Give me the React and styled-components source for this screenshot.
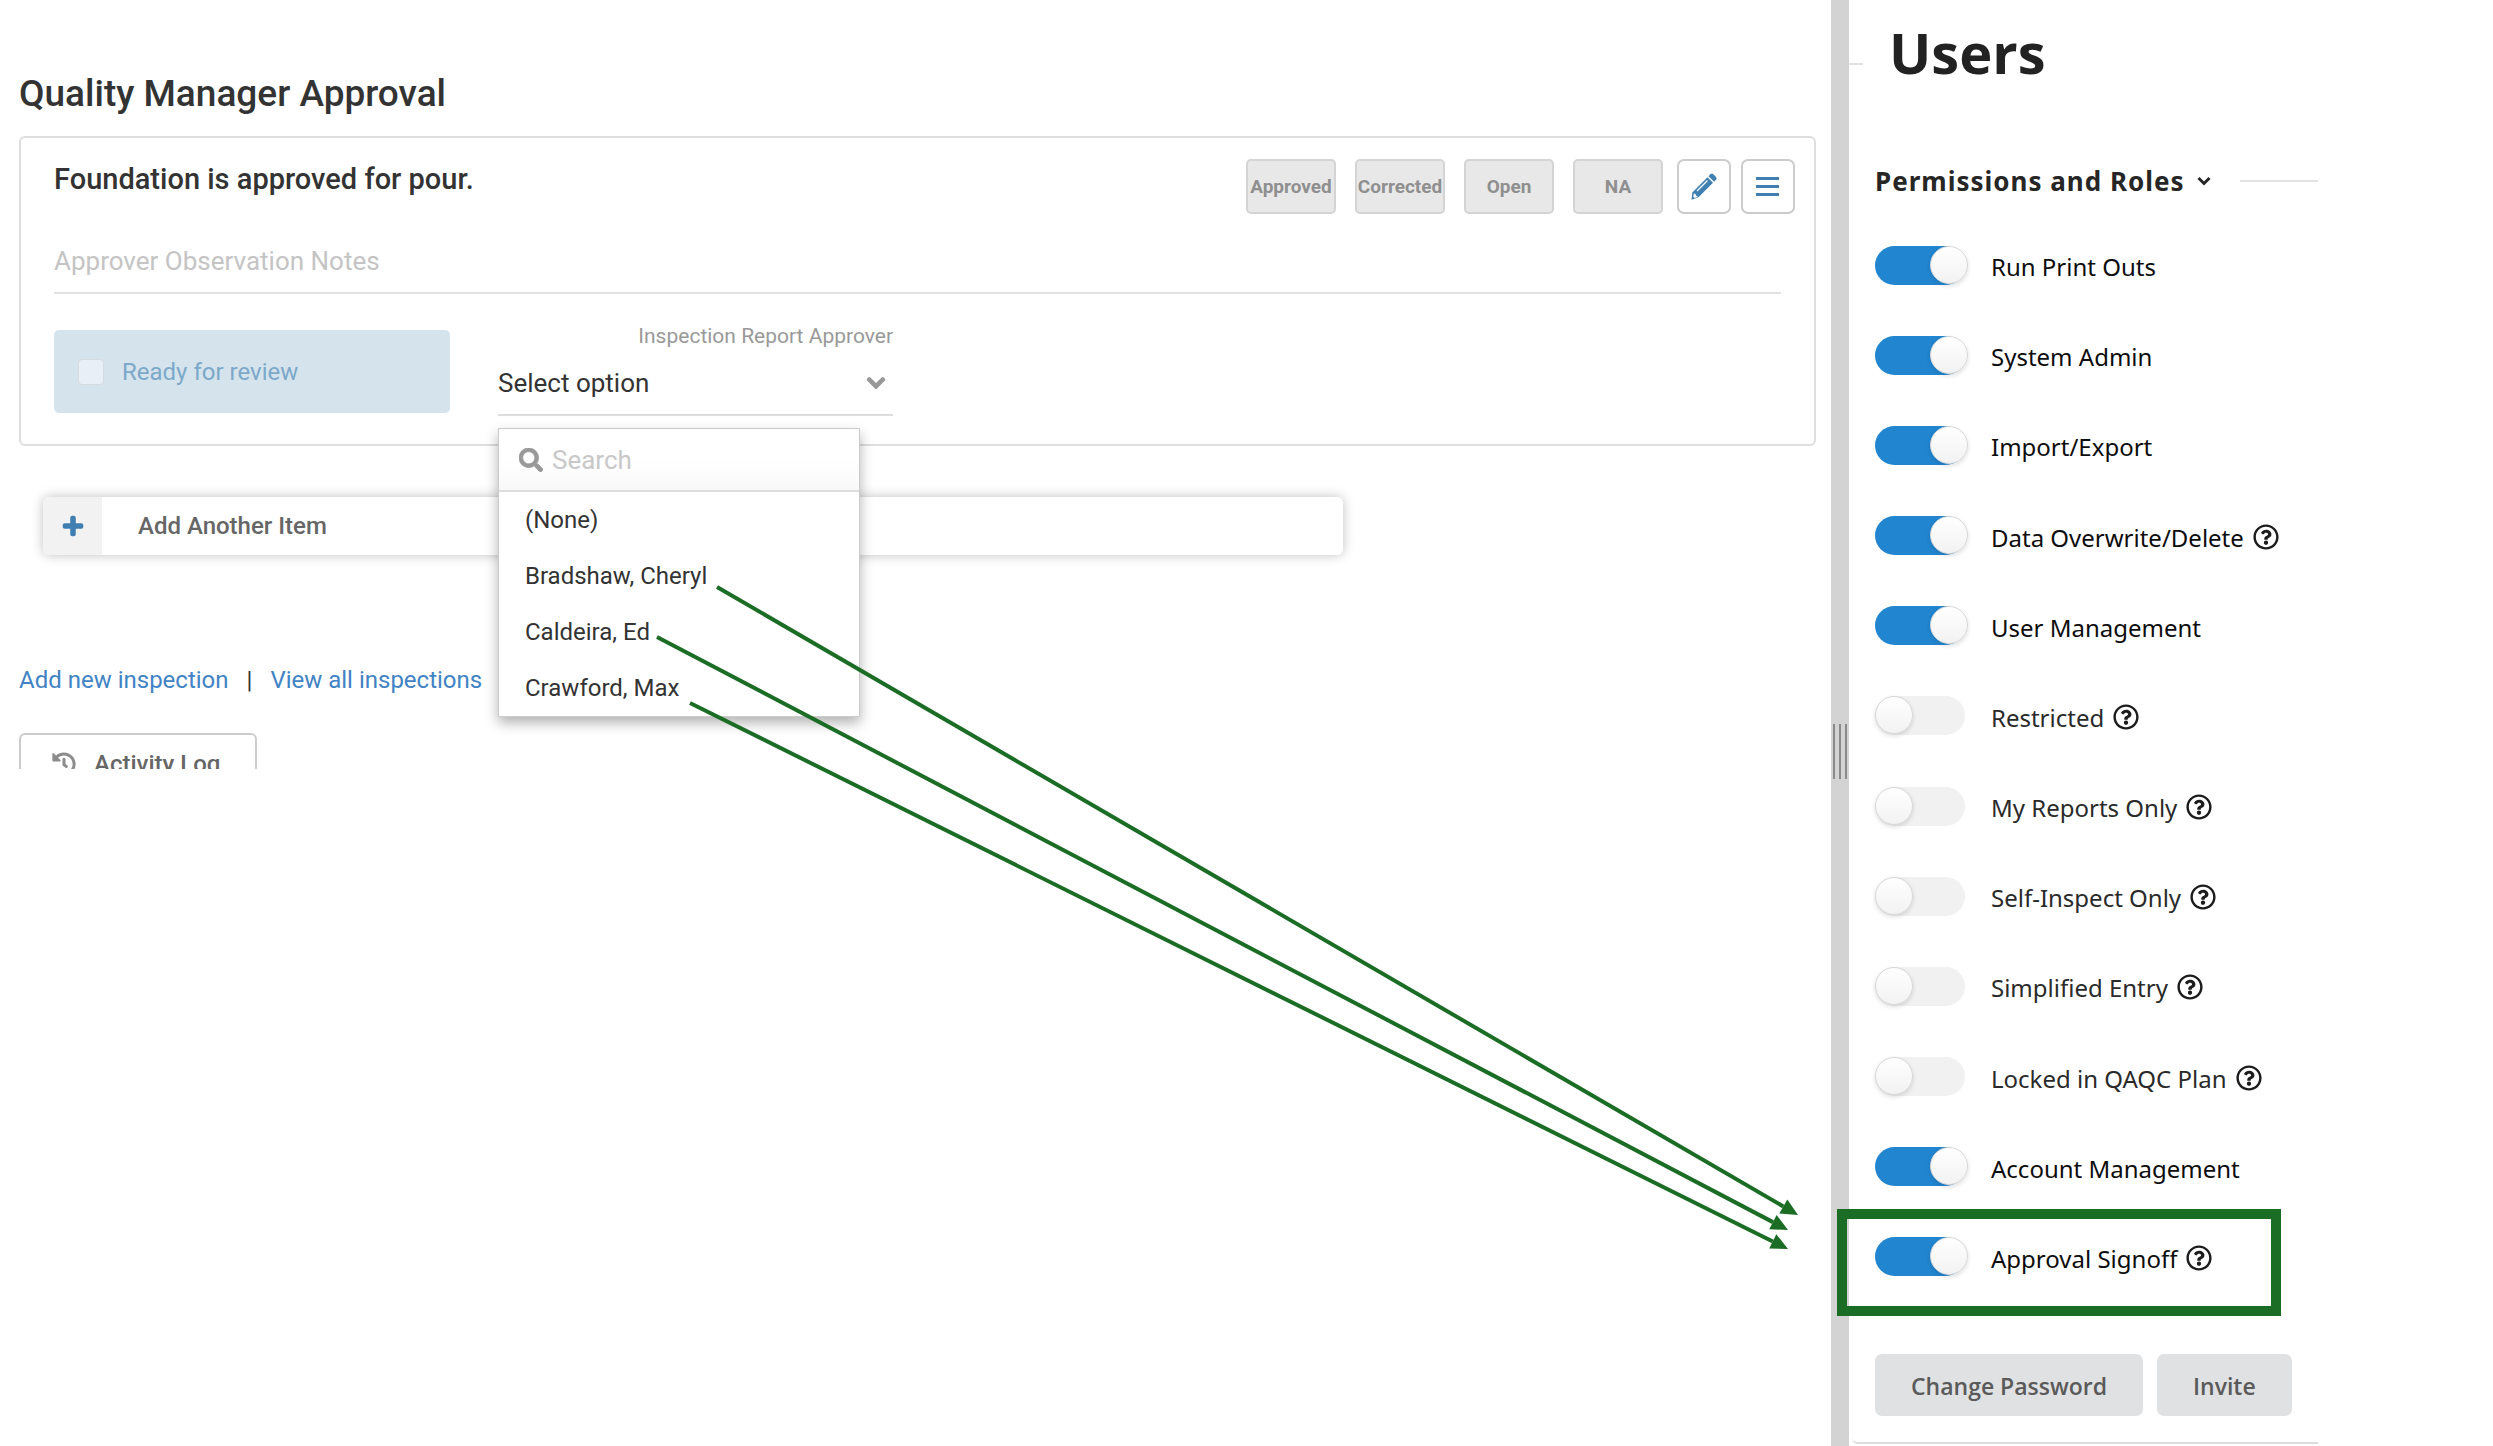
import React from "react";
import styled, { createGlobalStyle } from "styled-components";
import {
  FaChevronDown,
  FaHistory,
  FaPlus,
  FaRegQuestionCircle,
  FaSearch,
} from "react-icons/fa";

const GREEN = "#1b6c24";
const BLUE = "#3f7fb1";

const GlobalStyle = createGlobalStyle`
  *, *::before, *::after { box-sizing: border-box; }
  body { margin: 0; background: #fff; color: #333; font-family: Roboto, "Liberation Sans", sans-serif; }
  button, input, select { font-family: inherit; margin: 0; }
  h1, h2, h3, ul { margin: 0; padding: 0; }
  ul { list-style: none; }
`;

const Page = styled.div`
  position: relative;
  display: flex;
  min-height: 100vh;
  overflow: hidden;
`;

const Inspection = styled.main`
  flex: 1;
  min-width: 0;
  padding: 72px 15px 0 19px;
`;

const Heading = styled.h1`
  font-size: 37px;
  line-height: 44px;
  font-weight: 500;
`;

const Card = styled.section`
  margin-top: 20px;
  padding: 21px 33px 28px 33px;
  border: 2px solid #dedede;
  border-radius: 6px;
`;

const CardHeader = styled.div`
  display: flex;
  justify-content: space-between;
  align-items: flex-start;
  margin-right: -14px;
`;

const ItemTitle = styled.h2`
  padding-top: 2px;
  font-size: 29px;
  line-height: 36px;
  font-weight: 500;
`;

const Actions = styled.div`
  display: flex;
  gap: 10px;
`;

const Statuses = styled.div`
  display: flex;
  gap: 19px;
  margin-right: 4px;
`;

const StatusButton = styled.button`
  width: 90px;
  height: 55px;
  padding: 0;
  border: 2px solid #d4d4d4;
  border-radius: 5px;
  background: #e8e8e8;
  color: #8f8f8f;
  font-size: 19px;
  font-weight: 700;
`;

const IconButton = styled.button`
  display: flex;
  align-items: center;
  justify-content: center;
  width: 54px;
  height: 55px;
  padding: 0;
  border: 2px solid #ccc;
  border-radius: 7px;
  background: #fff;
  color: ${BLUE};
`;

const NotesInput = styled.input`
  display: block;
  width: 100%;
  height: 64px;
  margin-top: 16px;
  padding: 0;
  border: 0;
  border-bottom: 2px solid #e0e0e0;
  background: transparent;
  font-size: 26px;
  &::placeholder { color: #c4c4c4; }
`;

const Fields = styled.div`
  display: flex;
  align-items: flex-end;
  gap: 48px;
  margin-top: 30px;
`;

const ReadyBox = styled.label`
  display: flex;
  align-items: center;
  gap: 18px;
  width: 396px;
  height: 83px;
  margin-bottom: 3px;
  padding-left: 24px;
  border-radius: 5px;
  background: #d5e3ec;
  color: #7ca8c9;
  font-size: 24px;
`;

const ReadyCheck = styled.input`
  appearance: none;
  width: 26px;
  height: 26px;
  border: 1px solid #d6dbe0;
  border-radius: 4px;
  background: #e8eff6;
`;

const Approver = styled.div`
  position: relative;
  width: 395px;
`;

const ApproverLabel = styled.label`
  display: block;
  margin-bottom: 4px;
  color: #999;
  font-size: 21px;
  line-height: 24px;
  text-align: right;
`;

const SelectWrap = styled.div`
  display: flex;
  align-items: center;
  height: 64px;
  border-bottom: 2px solid #ddd;
  color: #999;
`;

const Select = styled.select`
  appearance: none;
  flex: 1;
  height: 62px;
  margin-right: -28px;
  padding: 0;
  border: 0;
  background: transparent;
  color: #333;
  font-size: 26px;
`;

const SelectArrow = styled(FaChevronDown)`
  margin-right: 7px;
  font-size: 20px;
  pointer-events: none;
  stroke-width: 36px;
`;

const Dropdown = styled.div`
  position: absolute;
  z-index: 2;
  top: 104px;
  left: 0;
  width: 362px;
  border: 1px solid #ccc;
  background: #fff;
  box-shadow: 0 6px 12px rgba(0, 0, 0, 0.3);
`;

const SearchRow = styled.label`
  display: flex;
  align-items: center;
  gap: 9px;
  height: 63px;
  padding-left: 20px;
  border-bottom: 2px solid #ddd;
  background: linear-gradient(#fff 50%, #f9f9f9);
  color: #999;
  font-size: 24px;
  svg { stroke-width: 16px; }
`;

const SearchInput = styled.input`
  flex: 1;
  min-width: 0;
  padding: 0;
  border: 0;
  background: transparent;
  font-size: 26px;
  &::placeholder { color: #c8c8c8; }
`;

const Option = styled.button`
  display: block;
  width: 100%;
  height: 56px;
  padding: 0 26px;
  border: 0;
  background: transparent;
  color: #333;
  font-size: 24px;
  text-align: left;
`;

const AddItem = styled.button`
  display: flex;
  align-items: center;
  width: 1300px;
  max-width: 100%;
  height: 58px;
  margin: 51px 0 0 24px;
  padding: 0;
  overflow: visible;
  border: 0;
  border-radius: 6px;
  background: #fff;
  box-shadow: 0 0 12px rgba(0, 0, 0, 0.25);
  color: #666;
  font-size: 24px;
  font-weight: 500;
`;

const AddIcon = styled.span`
  display: flex;
  align-items: center;
  justify-content: center;
  width: 59px;
  height: 100%;
  margin-right: 36px;
  border-radius: 6px 0 0 6px;
  background: #f2f2f2;
  color: ${BLUE};
  font-size: 22px;
  svg { stroke-width: 32px; }
`;

const Links = styled.nav`
  display: flex;
  gap: 18px;
  margin-top: 111px;
  font-size: 24px;
  line-height: 28px;
`;

const Link = styled.a`
  color: #4183c4;
  text-decoration: none;
`;

const ActivityClip = styled.div`
  height: 36px;
  margin-top: 39px;
  overflow: hidden;
`;

const ActivityButton = styled.button`
  display: flex;
  align-items: center;
  gap: 18px;
  width: 238px;
  height: 62px;
  padding: 0 31px;
  border: 2px solid #ccc;
  border-radius: 6px;
  background: #fff;
  color: #666;
  font-size: 24px;
  font-weight: 500;
  white-space: nowrap;
  svg { color: #8c8c8c; flex: none; }
`;

const Splitter = styled.div`
  display: flex;
  justify-content: center;
  gap: 4px;
  width: 18px;
  padding-top: calc(50vh + 1px);
  background: #d3d3d3;
`;

const GripLine = styled.span`
  width: 2px;
  height: 55px;
  background: #8a8a8a;
`;

const Users = styled.aside`
  display: flex;
  flex-direction: column;
  width: 644px;
  padding: 14px 175px 2px 26px;
  color: #1c1c1c;
  font-family: "Noto Sans", "Open Sans", sans-serif;
`;

const UsersHeader = styled.header`
  display: flex;
  align-items: flex-end;
  gap: 26px;
  margin-left: -26px;
`;

const UsersTitle = styled.h1`
  color: #222;
  font-family: "Open Sans", "Noto Sans", sans-serif;
  font-size: 56px;
  line-height: 76px;
  font-weight: 700;
`;

const HeaderRule = styled.span`
  width: 14px;
  height: 2px;
  margin-bottom: 25px;
  background: #e2e2e2;
`;

const SectionHeader = styled.div`
  display: flex;
  align-items: center;
  gap: 29px;
  margin-top: 73px;
`;

const SectionToggle = styled.button`
  display: flex;
  align-items: center;
  gap: 12px;
  padding: 0;
  border: 0;
  background: transparent;
  color: #262626;
  font-size: 26px;
  line-height: 36px;
  font-weight: 700;
  letter-spacing: 1px;
  white-space: nowrap;
`;

const SectionRule = styled.span`
  flex: 1;
  height: 2px;
  background: #e2e2e2;
`;

const Permissions = styled.ul`
  display: grid;
  grid-auto-rows: 1fr;
  flex: 1;
  margin-top: 21px;
`;

const Permission = styled.li`
  position: relative;
  display: flex;
  align-items: center;
  min-height: 60px;
`;

const Highlight = styled.span`
  position: absolute;
  inset: -3px 37px -14px -38px;
  border: 10px solid ${GREEN};
  pointer-events: none;
`;

const Switch = styled.input`
  appearance: none;
  position: relative;
  flex: none;
  width: 90px;
  height: 39px;
  margin-right: 26px;
  border-radius: 20px;
  background: #f1f1f1;

  &::before {
    content: "";
    position: absolute;
    top: 0;
    left: 0;
    width: 38px;
    height: 38px;
    border: 1px solid #d8d8d8;
    border-radius: 50%;
    background: linear-gradient(#fff, #f2f2f2);
    box-shadow: 0 2px 4px rgba(34, 36, 38, 0.15);
  }

  &:checked { background: #2185d0; }
  &:checked::before { left: 55px; }
`;

const PermissionLabel = styled.label`
  padding-top: 4px;
  color: ${(p) => (p.$on ? "#0d0d0d" : "#2a2a2a")};
  font-size: 24px;
  line-height: 34px;
  white-space: nowrap;
`;

const HelpButton = styled.button`
  display: flex;
  margin-left: 9px;
  padding: 2px 0 0;
  border: 0;
  background: transparent;
  color: #1c1c1c;
  font-size: 26px;
`;

const Footer = styled.div`
  display: flex;
  gap: 14px;
  margin-top: 52px;
`;

const FooterButton = styled.button`
  height: 62px;
  padding: 2px 36px 0;
  border: 0;
  border-radius: 7px;
  background: #e0e1e2;
  color: #5a5a5a;
  font-family: "Open Sans", "Noto Sans", sans-serif;
  font-size: 23px;
  font-weight: 600;
  white-space: nowrap;
`;

const PanelEdge = styled.div`
  height: 10px;
  margin: 18px 0 0 -23px;
  border-bottom: 2px solid #dcdcdd;
  border-bottom-left-radius: 6px;
`;

const ArrowLayer = styled.svg`
  position: absolute;
  z-index: 3;
  top: 0;
  left: 0;
  pointer-events: none;
`;

const statuses = ["Approved", "Corrected", "Open", "NA"];
const approvers = ["(None)", "Bradshaw, Cheryl", "Caldeira, Ed", "Crawford, Max"];

const permissions = [
  { name: "Run Print Outs", on: true },
  { name: "System Admin", on: true },
  { name: "Import/Export", on: true },
  { name: "Data Overwrite/Delete", on: true, help: true },
  { name: "User Management", on: true },
  { name: "Restricted", help: true },
  { name: "My Reports Only", help: true },
  { name: "Self-Inspect Only", help: true },
  { name: "Simplified Entry", help: true },
  { name: "Locked in QAQC Plan", help: true },
  { name: "Account Management", on: true },
  { name: "Approval Signoff", on: true, help: true, highlight: true },
];

const arrows = [
  [717, 587, 1798, 1215],
  [657, 637, 1788, 1230],
  [690, 703, 1788, 1249],
];

function PencilIcon() {
  return (
    <svg width="26" height="28" viewBox="0 0 26 28" aria-hidden="true">
      <path
        fill="currentColor"
        d="M17.5 3.2 L19.3 1.3 Q20.8 0 22.3 1.2 L25 4 Q26.2 5.400 25 6.800 L23.1 8.700 Z M16.500 4.300 L22 9.800 L7.500 24.300 L0.500 26.800 L1.300 19.600 Z"
      />
      <path fill="none" stroke="#fff" strokeWidth="1.300" d="M6 18 L16.500 7.500" />
      <path fill="#fff" d="M2.800 20.500 L4.600 21 L4.900 22.800 L6.500 23 L6.300 23.900 L3.600 24.900 L2.300 23.700 Z" />
    </svg>
  );
}

function MenuIcon() {
  return (
    <svg width="24" height="22" viewBox="0 0 24 22" fill="currentColor" aria-hidden="true">
      <rect x="0" y="1" width="23" height="3" />
      <rect x="0" y="9" width="23" height="3" />
      <rect x="0" y="17" width="23" height="3" />
    </svg>
  );
}

function SmallChevron() {
  return (
    <svg width="14" height="10" viewBox="0 0 14 10" fill="none" aria-hidden="true">
      <path d="M1.5 2 L7 7.5 L12.5 2" stroke="currentColor" strokeWidth="3" />
    </svg>
  );
}

function Arrows() {
  return (
    <ArrowLayer width="1831" height="1300" aria-hidden="true">
      {arrows.map(([x1, y1, x2, y2]) => {
        const length = Math.hypot(x2 - x1, y2 - y1);
        const ux = (x2 - x1) / length;
        const uy = (y2 - y1) / length;
        const bx = x2 - ux * 17;
        const by = y2 - uy * 17;
        return (
          <g key={y1} fill={GREEN} stroke={GREEN}>
            <line x1={x1} y1={y1} x2={bx} y2={by} strokeWidth="4" />
            <polygon
              stroke="none"
              points={`${x2},${y2} ${bx - uy * 8},${by + ux * 8} ${bx + uy * 8},${by - ux * 8}`}
            />
          </g>
        );
      })}
    </ArrowLayer>
  );
}

export default function App() {
  return (
    <Page>
      <GlobalStyle />
      <Inspection>
        <Heading>Quality Manager Approval</Heading>
        <Card>
          <CardHeader>
            <ItemTitle>Foundation is approved for pour.</ItemTitle>
            <Actions>
              <Statuses>
                {statuses.map((s) => (
                  <StatusButton key={s} type="button">{s}</StatusButton>
                ))}
              </Statuses>
              <IconButton type="button" aria-label="Edit"><PencilIcon /></IconButton>
              <IconButton type="button" aria-label="Menu"><MenuIcon /></IconButton>
            </Actions>
          </CardHeader>
          <NotesInput aria-label="Approver Observation Notes" placeholder="Approver Observation Notes" />
          <Fields>
            <ReadyBox>
              <ReadyCheck type="checkbox" />
              Ready for review
            </ReadyBox>
            <Approver>
              <ApproverLabel htmlFor="approver">Inspection Report Approver</ApproverLabel>
              <SelectWrap>
                <Select id="approver">
                  <option>Select option</option>
                </Select>
                <SelectArrow />
              </SelectWrap>
              <Dropdown>
                <SearchRow>
                  <FaSearch />
                  <SearchInput aria-label="Search" placeholder="Search" />
                </SearchRow>
                {approvers.map((a) => (
                  <Option key={a} type="button">{a}</Option>
                ))}
              </Dropdown>
            </Approver>
          </Fields>
        </Card>
        <AddItem type="button">
          <AddIcon><FaPlus /></AddIcon>
          Add Another Item
        </AddItem>
        <Links>
          <Link href="#new">Add new inspection</Link>
          <span>|</span>
          <Link href="#all">View all inspections</Link>
        </Links>
        <ActivityClip>
          <ActivityButton type="button"><FaHistory />Activity Log</ActivityButton>
        </ActivityClip>
      </Inspection>
      <Splitter>
        <GripLine />
        <GripLine />
        <GripLine />
      </Splitter>
      <Users>
        <UsersHeader>
          <HeaderRule />
          <UsersTitle>Users</UsersTitle>
        </UsersHeader>
        <SectionHeader>
          <SectionToggle type="button">
            Permissions and Roles
            <SmallChevron />
          </SectionToggle>
          <SectionRule />
        </SectionHeader>
        <Permissions>
          {permissions.map((p, i) => (
            <Permission key={p.name}>
              <Switch id={`perm-${i}`} type="checkbox" role="switch" defaultChecked={p.on} />
              <PermissionLabel htmlFor={`perm-${i}`} $on={p.on}>{p.name}</PermissionLabel>
              {p.help && (
                <HelpButton type="button" aria-label={`About ${p.name}`}>
                  <FaRegQuestionCircle />
                </HelpButton>
              )}
              {p.highlight && <Highlight />}
            </Permission>
          ))}
        </Permissions>
        <Footer>
          <FooterButton type="button">Change Password</FooterButton>
          <FooterButton type="button">Invite</FooterButton>
        </Footer>
        <PanelEdge />
      </Users>
      <Arrows />
    </Page>
  );
}
